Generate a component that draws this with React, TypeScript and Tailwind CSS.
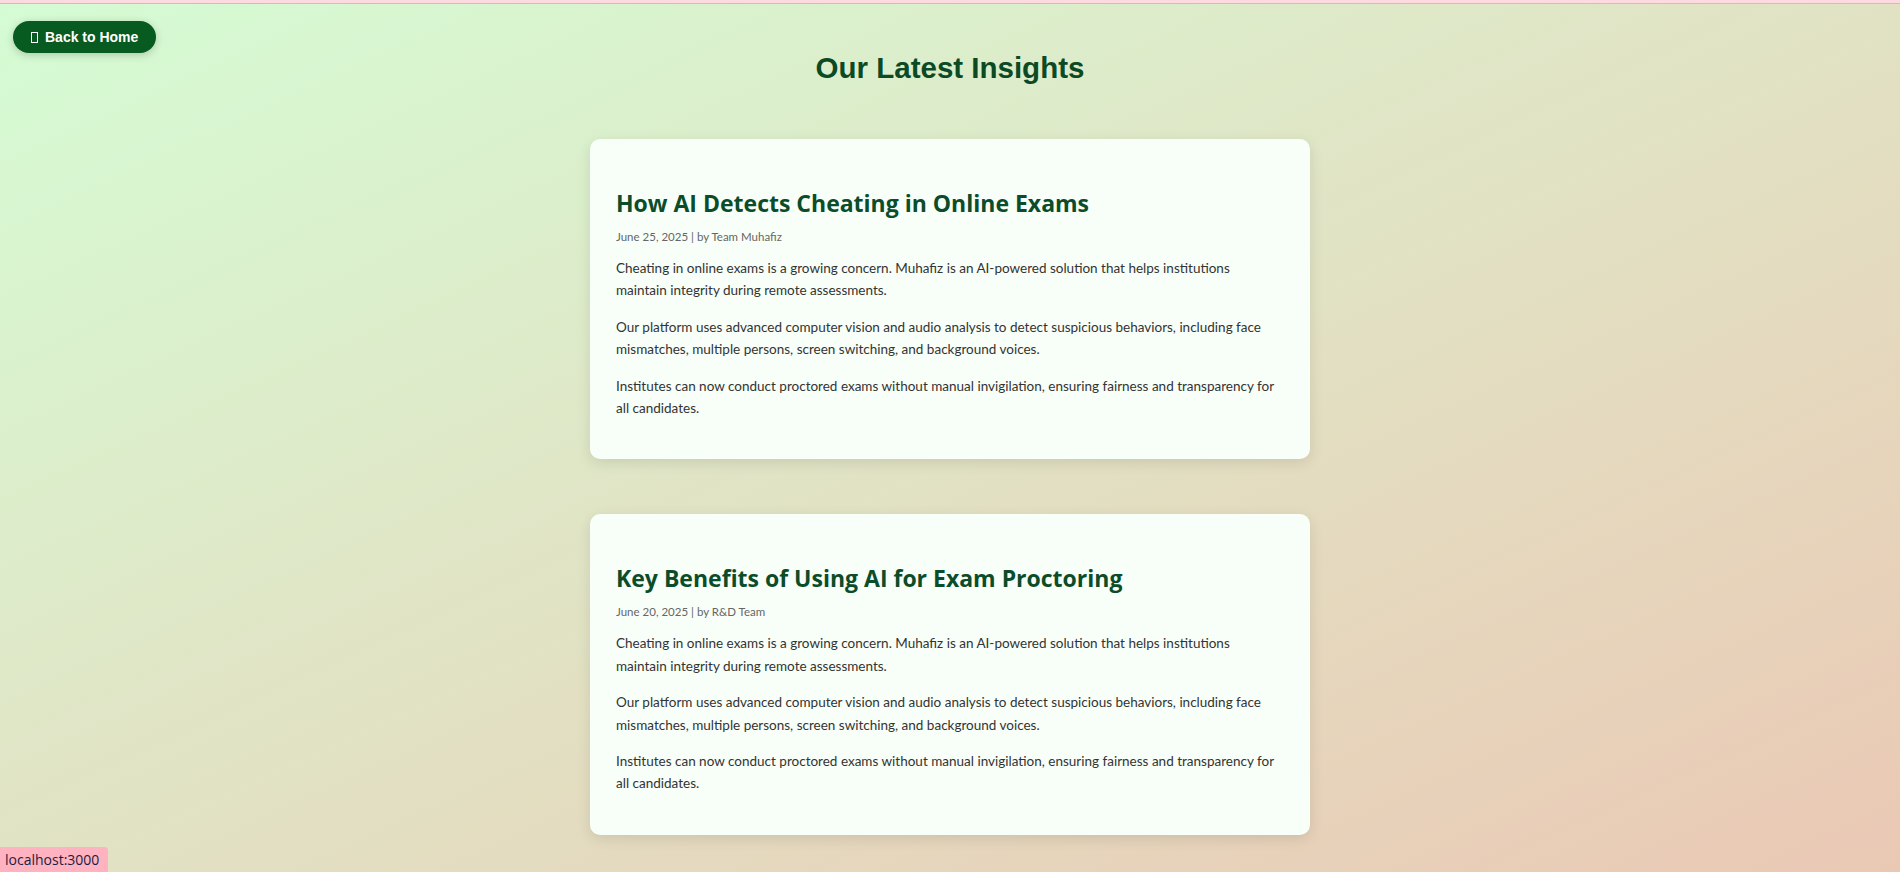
import React from 'react';

const posts = [
  { title: 'How AI Detects Cheating in Online Exams', date: 'June 25, 2025', author: 'Team Muhafiz' },
  { title: 'Key Benefits of Using AI for Exam Proctoring', date: 'June 20, 2025', author: 'R&D Team' },
];

const paragraphs = [
  'Cheating in online exams is a growing concern. Muhafiz is an AI-powered solution that helps institutions maintain integrity during remote assessments.',
  'Our platform uses advanced computer vision and audio analysis to detect suspicious behaviors, including face mismatches, multiple persons, screen switching, and background voices.',
  'Institutes can now conduct proctored exams without manual invigilation, ensuring fairness and transparency for all candidates.',
];

const App: React.FC = () => {
  return (
    <div className="relative min-h-screen bg-linear-to-br from-[#d4fcd4] to-[#eac8b4] font-['Open_Sans',sans-serif]">
      {/* top strip */}
      <div className="h-[4px] bg-[#fdd9e0] border-b border-[#c9bfc2]" />

      <button className="absolute top-[21px] left-[13px] h-8 px-[18px] rounded-full bg-[#075b20] text-white text-[14px] font-bold font-['Liberation_Sans',Arial,sans-serif] flex items-center shadow-[0_2px_8px_rgba(0,0,0,0.2)]">
        <span className="inline-block w-[7px] h-[11px] border border-white mr-[7px]" />
        Back to Home
      </button>

      <div className="pt-[47px] pb-[38px]">
        <h1 className="text-center text-[29.5px] leading-[33px] font-bold text-[#0b4a25] font-['Liberation_Sans',Arial,sans-serif]">
          Our Latest Insights
        </h1>

        <div className="mt-[55px] flex flex-col gap-[55px]">
          {posts.map((post) => (
            <article
              key={post.title}
              className="w-[720px] mx-auto bg-[#f8fff9] rounded-[10px] pl-[26px] pr-6 pt-6 pb-[26px] shadow-[0_4px_14px_rgba(0,0,0,0.1)]"
            >
              <h2 className="mt-[24px] mb-[10px] text-[23px] leading-[32px] font-bold text-[#0b4d2a]">
                {post.title}
              </h2>
              <p className="mb-[12px] text-[11.5px] leading-4 text-[#666] font-['Lato',sans-serif]">
                {post.date} | by {post.author}
              </p>
              {paragraphs.map((text, i) => (
                <p key={i} className="mb-[14px] pr-[8px] text-[13.5px] leading-[22.4px] text-[#333] font-['Lato',sans-serif]">
                  {text}
                </p>
              ))}
            </article>
          ))}
        </div>
      </div>

      <div className="fixed bottom-0 left-0 h-[25px] pl-[5px] pr-[9px] flex items-center bg-[#ffb3c0] rounded-tr-[4px] text-[14px] text-[#1c1c40]">
        localhost:3000
      </div>
    </div>
  );
};

export default App;
